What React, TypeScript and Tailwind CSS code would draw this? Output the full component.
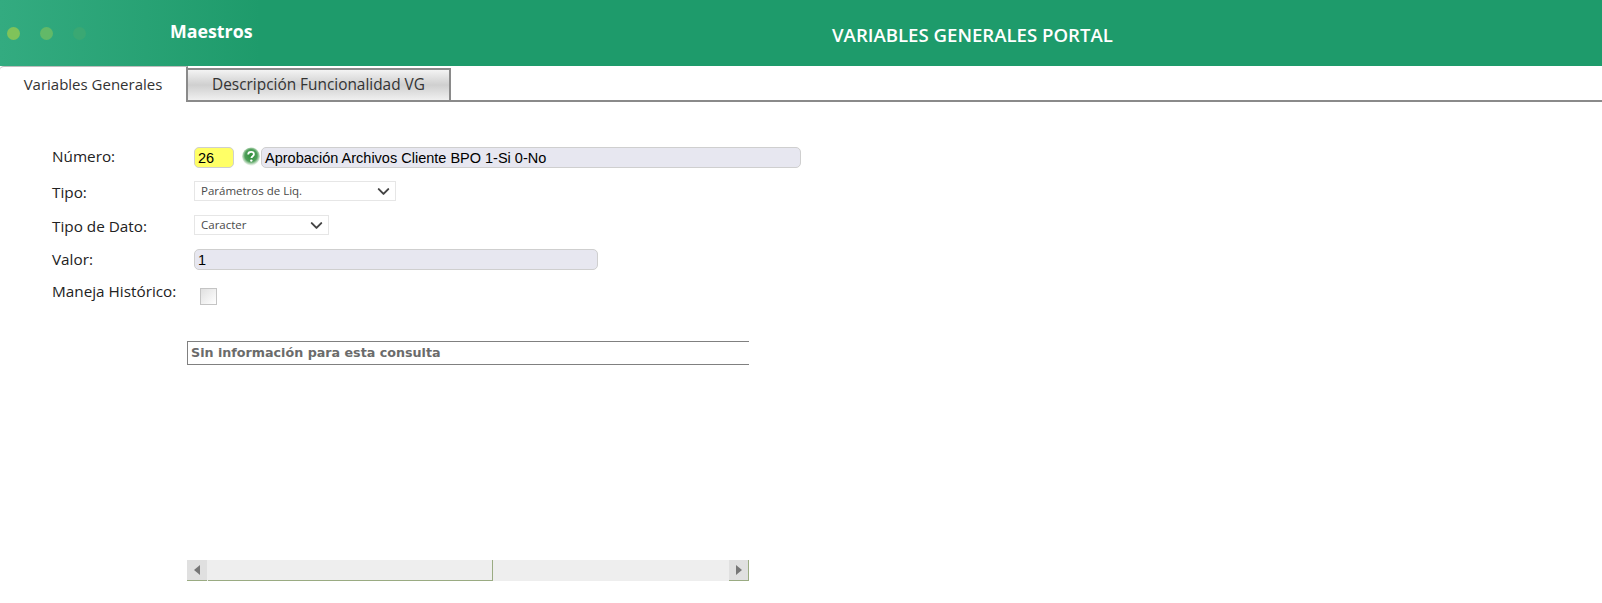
import type { ReactNode } from 'react'
import { ChevronDown } from 'lucide-react'

const labelFont = "font-['Open_Sans','Noto_Sans',sans-serif]"

function Select({ label, width }: { label: string; width: string }) {
  return (
    <div className={`flex h-5 items-center justify-between border border-[#e6e6e6] bg-white pl-[6px] pr-[2px] ${width}`}>
      <span className={`${labelFont} text-[11.5px] text-[#4a4a4a]`}>{label}</span>
      <ChevronDown size={19} strokeWidth={2.5} className="text-[#444]" />
    </div>
  )
}

function HelpIcon() {
  return (
    <svg width="18" height="20" viewBox="0 0 18 20">
      <defs>
        <radialGradient id="help" cx="50%" cy="45%" r="52%">
          <stop offset="0%" stopColor="#2f8f3a" />
          <stop offset="65%" stopColor="#4f9f5a" />
          <stop offset="85%" stopColor="#a9d0ac" />
          <stop offset="100%" stopColor="#e3efe3" />
        </radialGradient>
      </defs>
      <circle cx="9" cy="9.5" r="9" fill="url(#help)" />
      <path d="M6.2 7.4c0-1.6 1.3-2.5 2.9-2.5s2.8.9 2.8 2.3c0 2-2.5 2-2.5 3.9" fill="none" stroke="#fff" strokeWidth="1.8" />
      <circle cx="9.3" cy="13.6" r="1.2" fill="#fff" />
    </svg>
  )
}

function Row({ label, children, className, labelClass = '' }: { label: string; children: ReactNode; className: string; labelClass?: string }) {
  return (
    <div className={`flex items-start ${className}`}>
      <div className={`${labelFont} w-[142px] shrink-0 text-[15.3px] leading-5 text-[#222] ${labelClass}`}>{label}</div>
      {children}
    </div>
  )
}

export default function App() {
  return (
    <div className="h-[603px] w-full overflow-hidden bg-white">
      {/* Top bar */}
      <div className="relative flex h-[66px] items-center bg-[#1e9b6b]">
        <div className="absolute inset-y-0 left-0 w-[260px] bg-gradient-to-r from-[#33ab80] to-[#1e9b6b]" />
        <div className="relative flex w-[170px] gap-[20px] pl-[7px]">
          <span className="h-[13px] w-[13px] rounded-full bg-[#7fc35a]" />
          <span className="h-[13px] w-[13px] rounded-full bg-[#62b968]" />
          <span className="h-[13px] w-[13px] rounded-full bg-[#3aa873]" />
        </div>
        <span className={`${labelFont} relative -mt-[3px] text-[17.8px] font-bold text-white`}>Maestros</span>
        <span className={`${labelFont} absolute left-[832px] top-[23px] text-[18.6px] leading-6 font-semibold text-white`}>VARIABLES GENERALES PORTAL</span>
      </div>

      {/* Tabs */}
      <div className="flex h-[36px] items-end border-b-2 border-[#8a8a8a]">
        <div className={`${labelFont} -mb-[2px] flex h-[36px] w-[188px] items-center justify-center rounded-tl-sm border-t border-r-2 border-[#bdbdbd] border-r-[#8a8a8a] bg-white text-[15px] text-[#333]`}>
          Variables Generales
        </div>
        <div className={`${labelFont} flex h-[32px] w-[263px] items-center justify-center border-2 border-b-0 border-l-0 border-[#8a8a8a] bg-gradient-to-b from-[#f4f4f4] via-[#cfcfcf] to-[#f0f0f0] text-[15.4px] text-[#333]`}>
          Descripción Funcionalidad VG
        </div>
      </div>

      {/* Form */}
      <div className="pl-[52px] pt-[45px]">
        <Row label="Número:" className="h-[34px]" labelClass="-mt-[1px]">
          <div className="mt-[1px] flex items-start">
            <div className="-mt-[1px] h-[21px] w-[40px] rounded-[5px] border border-[#cfcfcf] bg-[#ffff66] pl-[3px] font-['Liberation_Sans',sans-serif] text-[14.5px] leading-[21px] text-black">26</div>
            <div className="-mt-[1px] ml-[8px] w-[19px]"><HelpIcon /></div>
            <div className="-mt-[1px] h-[21px] w-[540px] rounded-[5px] border border-[#cfcfcf] bg-[#e7e7f0] pl-[3px] font-['Liberation_Sans',sans-serif] text-[14.5px] leading-[21px] text-black">Aprobación Archivos Cliente BPO 1-Si 0-No</div>
          </div>
        </Row>
        <Row label="Tipo:" className="h-[34px]" labelClass="mt-[1px]">
          <Select label="Parámetros de Liq." width="w-[202px]" />
        </Row>
        <Row label="Tipo de Dato:" className="h-[34px]" labelClass="mt-[1px]">
          <Select label="Caracter" width="w-[135px]" />
        </Row>
        <Row label="Valor:" className="h-[34px]">
          <div className="h-[21px] w-[404px] rounded-[5px] border border-[#cfcfcf] bg-[#e7e7f0] pl-[3px] font-['Liberation_Sans',sans-serif] text-[14.5px] leading-[21px] text-black">1</div>
        </Row>
        <Row label="Maneja Histórico:" className="h-[37px]" labelClass="-mt-[2px]">
          <div className="ml-[6px] mt-[5px] h-[17px] w-[17px] border border-[#c4c4c4] bg-gradient-to-br from-[#e0e0e0] to-white" />
        </Row>
      </div>

      {/* Results grid */}
      <div className="ml-[187px] mt-[21px] w-[562px]">
        <div className="flex h-[24px] items-center border-y border-l border-[#808080] pl-[3px] font-['DejaVu_Sans',sans-serif] text-[12.7px] font-bold text-[#6b6b6b]">
          Sin información para esta consulta
        </div>
        <div className="mt-[195px] flex h-[21px] bg-[#eeeeee]">
          <div className="flex w-[20px] items-center justify-center border-b border-[#9aab82] bg-[#e0e0e0]">
            <span className="h-0 w-0 border-y-[5px] border-r-[6px] border-y-transparent border-r-[#777]" />
          </div>
          <div className="ml-[1px] w-[285px] border-r border-b border-[#9aab82] bg-[#eeeeee]" />
          <div className="flex-1" />
          <div className="ml-[1px] flex w-[20px] items-center justify-center border-r border-b border-[#9aab82] bg-[#e0e0e0]">
            <span className="h-0 w-0 border-y-[5px] border-l-[6px] border-y-transparent border-l-[#777]" />
          </div>
        </div>
      </div>
    </div>
  )
}
